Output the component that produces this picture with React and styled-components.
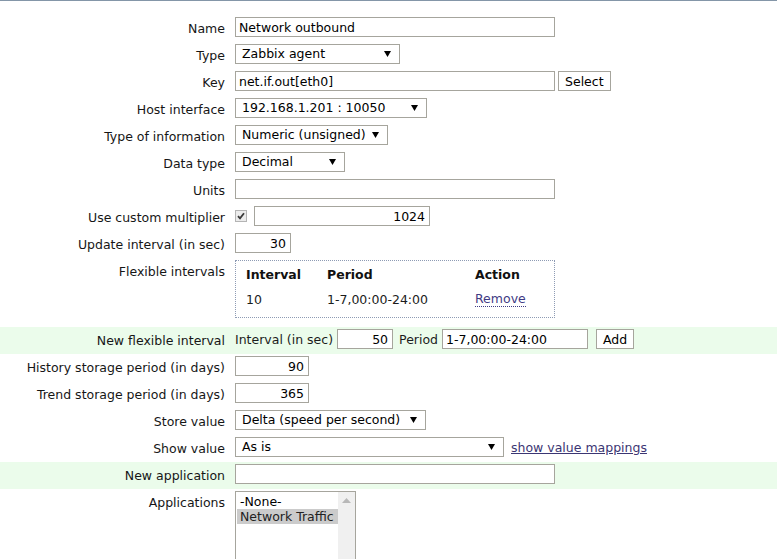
import React from 'react';
import styled, { createGlobalStyle } from 'styled-components';

const GlobalStyle = createGlobalStyle`
  html, body {
    margin: 0;
    padding: 0;
    background: #ffffff;
    overflow: hidden;
  }
  body {
    font-family: "DejaVu Sans", Verdana, sans-serif;
    font-size: 12.5px;
    color: #1c1c1c;
  }
`;

const Page = styled.div`
  border-top: 1px solid #8496a8;
  padding-top: 14px;
`;

const Row = styled.div`
  display: flex;
  align-items: flex-start;
  padding: 2px 0 5px;
  background: ${props => (props.$new ? '#ebfceb' : 'transparent')};
`;

// taller line box than the element so the text sits a bit low, like the original
const Label = styled.div`
  width: 225px;
  height: 20px;
  flex-shrink: 0;
  text-align: right;
  line-height: 24px;
  margin-right: 10px;
  white-space: nowrap;
  color: #161616;
`;

const Field = styled.div`
  display: flex;
  align-items: center;
  gap: ${props => props.$gap || 3}px;
  white-space: nowrap;
`;

const TextInput = styled.input`
  box-sizing: border-box;
  width: ${props => props.$w || 320}px;
  height: 20px;
  margin: 0;
  padding: 0 ${props => (props.$num ? 4 : 3)}px;
  border: 1px solid #a6a59d;
  background: #ffffff;
  font: inherit;
  color: #000;
  text-align: ${props => (props.$num ? 'right' : 'left')};
  outline: none;
`;

const SelectBox = styled.div`
  box-sizing: border-box;
  width: ${props => props.$w}px;
  height: 20px;
  display: flex;
  align-items: center;
  justify-content: space-between;
  padding: 0 8px 0 6px;
  border: 1px solid #a6a59d;
  color: #000;
  line-height: 18px;
`;

const Button = styled.button`
  box-sizing: border-box;
  height: 20px;
  margin: 0;
  padding: 0 ${props => props.$pad || 6}px;
  border: 1px solid #a6a59d;
  background: #ffffff;
  font: inherit;
  color: #000;
`;

const Check = styled.span`
  box-sizing: border-box;
  width: 12px;
  height: 12px;
  border: 1px solid #b4b4b4;
  background: #ececec;
  display: inline-flex;
  align-items: center;
  justify-content: center;
  margin-right: 5px;
`;

const IntervalBox = styled.div`
  box-sizing: border-box;
  width: 320px;
  height: 58px;
  margin-bottom: 4px;
  border: 1px dotted #8e9bb4;
  padding: 3px 10px 8px;
  display: grid;
  grid-template-columns: 81px 148px auto;
  grid-auto-rows: 20px;
  row-gap: 5px;
  align-items: center;
`;

const Head = styled.div`
  font-weight: bold;
  color: #111;
`;

const Cell = styled.div`
  color: #1c1c1c;
`;

const RemoveLink = styled.span`
  color: #3f3b84;
  border-bottom: 1px dotted #3f3b84;
  line-height: 15px;
  justify-self: start;
`;

const MapLink = styled.span`
  color: #3b3673;
  text-decoration: underline;
  margin-left: 4px;
`;

const ListBox = styled.div`
  box-sizing: border-box;
  width: 121px;
  height: 110px;
  border: 1px solid #a6a59d;
  display: flex;
`;

const Options = styled.div`
  flex: 1;
  padding: 2px 0 0 1px;
  overflow: hidden;
`;

const Option = styled.div`
  padding-left: 3px;
  line-height: 15px;
  white-space: nowrap;
  background: ${props => (props.$selected ? '#cbcbcb' : 'transparent')};
  color: ${props => (props.$selected ? '#222' : '#000')};
`;

const ScrollTrack = styled.div`
  width: 17px;
  background: #f0f0f0;
  display: flex;
  justify-content: center;
  padding-top: 6px;
  box-sizing: border-box;
`;

const Arrow = () => (
  <svg width="7" height="6" viewBox="0 0 7 6">
    <path d="M0 0 H7 L3.5 6 Z" fill="#000" />
  </svg>
);

const Select = ({ w, children }) => (
  <SelectBox $w={w}>
    <span>{children}</span>
    <Arrow />
  </SelectBox>
);

const FormRow = ({ label, isNew, children }) => (
  <Row $new={isNew}>
    <Label>{label}</Label>
    <Field>{children}</Field>
  </Row>
);

export default function App() {
  return (
    <Page>
      <GlobalStyle />
      <FormRow label="Name">
        <TextInput readOnly defaultValue="Network outbound" />
      </FormRow>
      <FormRow label="Type">
        <Select w={165}>Zabbix agent</Select>
      </FormRow>
      <FormRow label="Key">
        <TextInput readOnly defaultValue="net.if.out[eth0]" />
        <Button>Select</Button>
      </FormRow>
      <FormRow label="Host interface">
        <Select w={192}>192.168.1.201 : 10050</Select>
      </FormRow>
      <FormRow label="Type of information">
        <Select w={153}>Numeric (unsigned)</Select>
      </FormRow>
      <FormRow label="Data type">
        <Select w={110}>Decimal</Select>
      </FormRow>
      <FormRow label="Units">
        <TextInput readOnly defaultValue="" />
      </FormRow>
      <Row>
        <Label>Use custom multiplier</Label>
        <Field $gap={2}>
          <Check>
            <svg width="8" height="8" viewBox="0 0 8 8">
              <path d="M1 4.2 L3 6.4 L7 1.2" stroke="#3a3a3a" strokeWidth="1.8" fill="none" />
            </svg>
          </Check>
          <TextInput $w={176} $num readOnly defaultValue="1024" />
        </Field>
      </Row>
      <FormRow label="Update interval (in sec)">
        <TextInput $w={56} $num readOnly defaultValue="30" />
      </FormRow>
      <Row>
        <Label>Flexible intervals</Label>
        <IntervalBox>
          <Head>Interval</Head>
          <Head>Period</Head>
          <Head>Action</Head>
          <Cell>10</Cell>
          <Cell>1-7,00:00-24:00</Cell>
          <RemoveLink>Remove</RemoveLink>
        </IntervalBox>
      </Row>
      <Row $new>
        <Label>New flexible interval</Label>
        <Field $gap={4}>
          <span>Interval (in sec)</span>
          <TextInput $w={56} $num readOnly defaultValue="50" />
          <span style={{ marginLeft: 2 }}>Period</span>
          <TextInput $w={146} readOnly defaultValue="1-7,00:00-24:00" />
          <Button style={{ marginLeft: 4 }}>Add</Button>
        </Field>
      </Row>
      <FormRow label="History storage period (in days)">
        <TextInput $w={74} $num readOnly defaultValue="90" />
      </FormRow>
      <FormRow label="Trend storage period (in days)">
        <TextInput $w={74} $num readOnly defaultValue="365" />
      </FormRow>
      <FormRow label="Store value">
        <Select w={191}>Delta (speed per second)</Select>
      </FormRow>
      <FormRow label="Show value">
        <Select w={269}>As is</Select>
        <MapLink>show value mappings</MapLink>
      </FormRow>
      <FormRow label="New application" isNew>
        <TextInput readOnly defaultValue="" />
      </FormRow>
      <Row>
        <Label>Applications</Label>
        <ListBox>
          <Options>
            <Option>-None-</Option>
            <Option $selected>Network Traffic</Option>
          </Options>
          <ScrollTrack>
            <svg width="9" height="5" viewBox="0 0 9 5">
              <path d="M0 5 L4.5 0 L9 5 Z" fill="#b8b8b8" />
            </svg>
          </ScrollTrack>
        </ListBox>
      </Row>
    </Page>
  );
}
